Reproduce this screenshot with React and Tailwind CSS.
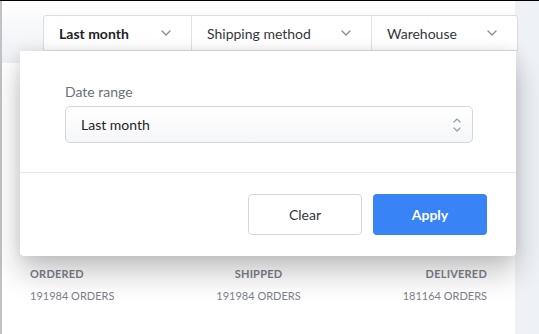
import React from 'react';

const Chevron = ({ className }) => (
  <svg viewBox="0 0 12 8" className={className} fill="none" stroke="currentColor" strokeWidth="1.4" strokeLinecap="round" strokeLinejoin="round">
    <path d="M2 2l4 4 4-4" />
  </svg>
);

const UpDown = () => (
  <svg viewBox="0 0 10 16" className="w-[10px] h-[16px] text-gray-400" fill="none" stroke="currentColor" strokeWidth="1.3" strokeLinecap="round" strokeLinejoin="round">
    <path d="M2 5l3-3 3 3" />
    <path d="M2 11l3 3 3-3" />
  </svg>
);

const filters = [
  { label: 'Last month', width: 'w-[147px]', bold: true },
  { label: 'Shipping method', width: 'w-[180px]' },
  { label: 'Warehouse', width: 'w-[146px]' },
];

const stats = [
  { label: 'ORDERED', value: '191984 ORDERS', align: 'items-start' },
  { label: 'SHIPPED', value: '191984 ORDERS', align: 'items-center' },
  { label: 'DELIVERED', value: '181164 ORDERS', align: 'items-end' },
];

export default function App() {
  return (
    <div
      className="relative w-[539px] h-[334px] overflow-hidden bg-[#eef1f6] border-t border-black"
      style={{ fontFamily: 'Lato, "Open Sans", sans-serif' }}
    >
      {/* underlying page */}
      <div className="absolute left-0 top-0 w-[515px] h-full border-l-2 border-[#bfc2c7] bg-white">
        <div className="h-[62px] bg-gradient-to-b from-white to-[#eef0f4]" />
        <div className="mt-[204px] mx-[28px] flex justify-between">
          {stats.map(s => (
            <div key={s.label} className={`flex flex-col ${s.align} gap-[8px]`}>
              <span className="text-[11px] font-bold text-[#7d828a] tracking-[0.02em] leading-[14px]">{s.label}</span>
              <span className="text-[11px] text-[#7d828a] leading-[14px]">{s.value}</span>
            </div>
          ))}
        </div>
      </div>

      {/* filter bar */}
      <div className="absolute left-[43px] top-[14px] flex h-[36px] bg-white border border-[#d9dde3] rounded-t-[3px]">
        {filters.map((f, i) => (
          <div
            key={f.label}
            className={`${f.width} flex items-center justify-between pl-[15px] pr-[19px] ${i > 0 ? 'border-l border-[#dfe2e7]' : ''}`}
          >
            <span className={`text-[14px] ${f.bold ? 'font-bold text-[#1f2329]' : 'text-[#33373d]'}`}>{f.label}</span>
            <Chevron className="w-[12px] h-[8px] text-[#8b9097]" />
          </div>
        ))}
      </div>

      {/* dropdown popover */}
      <div className="absolute left-[20px] top-[50px] w-[496px] h-[205px] bg-white rounded-b-[4px] shadow-[0_16px_30px_rgba(0,0,0,0.24),0_0_14px_rgba(0,0,0,0.08)]">
        <div className="px-[45px] pt-[32px] pb-[29px] border-b border-[#e5e7eb]">
          <div className="text-[14px] text-[#6b7078] leading-[18px]">Date range</div>
          <div className="mt-[5px] h-[37px] w-[408px] flex items-center justify-between pl-[15px] pr-[10px] rounded-[5px] border border-[#d3d7dd] bg-gradient-to-b from-white to-[#f5f6f8]">
            <span className="text-[14px] text-[#1f2329]">Last month</span>
            <UpDown />
          </div>
        </div>
        <div className="flex justify-end gap-[11px] pr-[29px] pt-[21px]">
          <button className="w-[114px] h-[41px] rounded-[4px] border border-[#d3d7dd] bg-white text-[14px] text-[#33373d]">
            Clear
          </button>
          <button className="w-[114px] h-[41px] rounded-[4px] bg-[#3883f6] text-[14px] font-bold text-white">
            Apply
          </button>
        </div>
      </div>
    </div>
  );
}
